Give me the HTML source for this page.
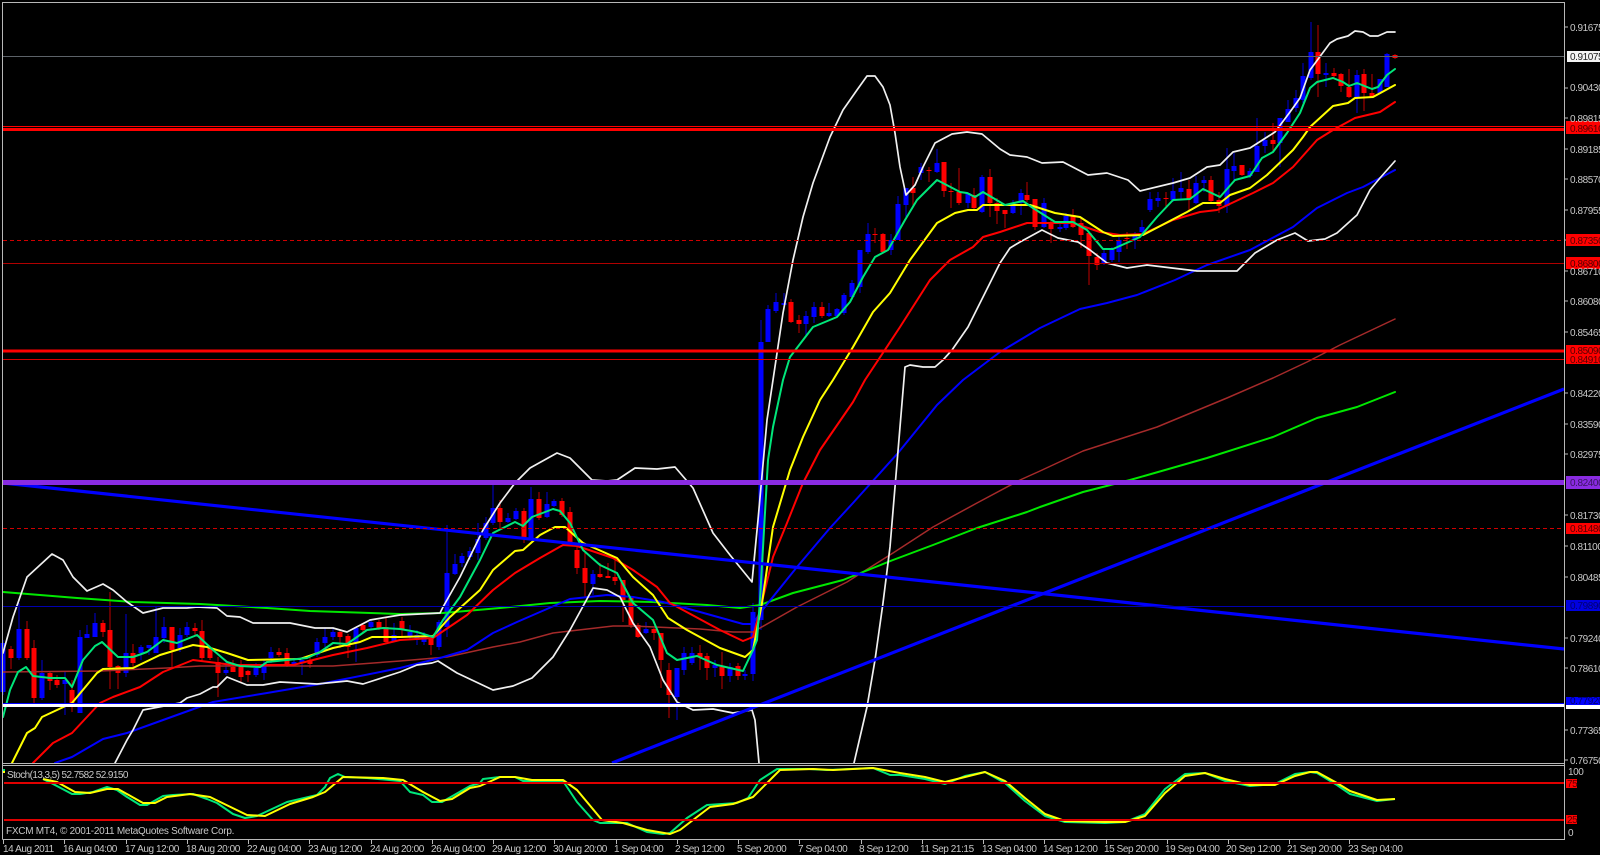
<!DOCTYPE html>
<html><head><meta charset="utf-8"><style>
html,body{margin:0;padding:0;background:#000;width:1600px;height:855px;overflow:hidden}
svg{display:block}
text{font-family:"Liberation Sans",sans-serif;font-size:10px;letter-spacing:-.42px;fill:#c8c8c8}
.d{fill:#500}
</style></head><body>
<svg width="1600" height="855" viewBox="0 0 1600 855" xmlns="http://www.w3.org/2000/svg">
<rect width="1600" height="855" fill="#000"/>
<g fill="none" shape-rendering="crispEdges">
<path stroke="#0000d8" stroke-width="1" d="M3 640V695M19 603V660M42 660V700M65 672V715M80 630V713M87 625V638M95 613V637M126 614V677M141 645V660M149 645V655M156 606V653M164 617V643M180 628V652M187 622V637M226 662V675M256 663V677M264 660V680M271 647V663M294 658V666M302 657V675M317 638V657M325 628V647M333 628V640M356 627V662M371 620V630M394 623V642M410 625V640M417 630V645M424 632V645M439 620V650M447 525V637M455 554V575M462 553V567M470 547V560M478 523V560M486 517V540M493 485V525M508 513V523M516 508V520M531 487V539M547 492V518M554 499V507M593 570V595M646 622V634M677 668V720M684 647V675M692 647V665M715 660V677M730 663V682M745 670V680M753 603V681M761 320V630M768 305V342M776 293V313M784 293V305M806 311V335M814 302V323M829 303V317M837 308V317M844 293V315M852 280V300M860 250V293M868 223V254M891 234V255M898 196V240M906 188V217M921 163V180M937 149V173M968 192V208M982 175V213M1013 200V214M1021 189V215M1044 198V228M1060 222V232M1066 213V230M1104 248V265M1112 247V262M1119 237V262M1135 232V249M1142 220V233M1150 192V212M1158 192V207M1173 178V202M1181 172V200M1196 176V204M1204 176V192M1227 148V213M1234 153V180M1250 168V178M1257 118V172M1265 132V153M1280 118V167M1288 100V122M1296 90V112M1303 63V103M1311 22V80M1326 63V87M1357 70V113M1380 79V93M1387 53V87"/>
<path stroke="#0000ff" stroke-width="5" d="M3 643V692M19 629V658M42 673V698M65 680V684M80 637V713M87 634V638M95 623V637M126 653V673M141 647V653M149 645V648M156 637V653M164 627V638M180 635V648M187 627V635M226 670V673M256 668V675M264 665V673M271 652V658M294 662V665M302 660V663M317 642V655M325 637V643M333 632V637M356 628V643M371 622V627M394 635V642M410 632V637M417 635V640M424 637V642M439 622V647M447 573V627M455 564V574M462 556V563M470 551V557M478 539V553M486 523V538M493 508V523M508 518V522M516 511V519M531 499V538M547 504V517M554 501V506M593 574V584M646 629V633M677 668V697M684 653V670M692 653V663M715 665V668M730 667V676M745 674V676M753 612V674M761 342V620M768 309V342M776 302V311M784 303V305M806 316V324M814 307V317M829 313V316M837 309V316M844 295V313M852 283V297M860 250V287M868 234V252M891 240V250M898 204V240M906 188V205M921 167V173M937 163V172M968 193V203M982 177V212M1013 203V213M1021 193V203M1044 203V227M1060 227V229M1066 216V228M1104 253V263M1112 250V260M1119 240V252M1135 235V240M1142 227V232M1150 199V210M1158 198V201M1173 191V200M1181 188V192M1196 183V203M1204 180V183M1227 169V206M1234 166V171M1250 171V176M1257 146V172M1265 140V146M1280 118V143M1288 109V122M1296 98V108M1303 76V100M1311 52V78M1326 73V75M1357 75V97M1380 79V93M1387 54V87"/>
<path stroke="#c00000" stroke-width="1" d="M11 646V669M27 621V660M34 640V703M50 672V690M57 675V688M72 680V712M103 620V637M110 592V689M118 665V689M133 644V667M172 627V667M195 623V635M202 620V662M210 648V660M218 657V697M233 660V672M241 660V682M248 670V682M279 648V657M287 648V667M310 655V668M340 630V648M348 634V658M363 623V632M379 620V630M386 617V643M402 617V638M431 637V655M500 500V528M524 508V543M539 492V520M562 498V517M570 507V545M577 545V574M585 553V597M600 563V578M608 563V578M615 560V585M623 580V622M631 597V628M638 623V638M654 628V640M661 633V688M669 663V718M700 645V670M707 653V680M722 652V689M738 663V680M791 299V323M799 315V333M822 302V318M875 228V243M883 233V253M913 177V208M929 167V182M944 162V197M951 183V208M959 168V205M974 188V210M990 169V217M997 198V224M1005 210V228M1027 182V202M1035 199V230M1051 220V243M1073 209V228M1081 218V248M1089 233V285M1097 253V270M1127 232V249M1166 192V208M1189 180V210M1211 176V202M1219 192V213M1242 165V176M1273 123V152M1318 25V97M1334 68V78M1341 73V92M1349 69V98M1364 69V111M1372 74V98M1395 54V59"/>
<path stroke="#ff0000" stroke-width="5" d="M11 649V658M27 629V658M34 648V698M50 673V681M57 680V685M72 690V705M103 623V632M110 630V667M118 666V673M133 653V663M172 627V650M195 628V631M202 631V658M210 648V658M218 662V673M233 667V672M241 667V677M248 671V675M279 652V655M287 653V665M310 660V664M340 632V637M348 636V647M363 625V630M379 622V628M386 627V642M402 621V630M431 638V645M500 508V522M524 511V537M539 499V518M562 501V515M570 512V542M577 550V568M585 568V583M600 574V577M608 576V578M615 577V581M623 580V600M631 598V625M638 625V637M654 629V633M661 633V660M669 670V695M700 653V657M707 656V668M722 667V676M738 666V676M791 302V322M799 320V324M822 307V316M875 234V235M883 234V252M913 188V193M929 170V171M944 162V191M951 191V192M959 192V203M974 195V208M990 177V203M997 203V211M1005 210V214M1027 195V200M1035 199V227M1051 223V229M1073 215V227M1081 223V235M1089 233V256M1097 257V265M1127 238V239M1166 198V199M1189 189V199M1211 180V201M1219 200V206M1242 165V175M1273 140V144M1318 52V74M1334 73V76M1341 74V86M1349 87V97M1364 74V93M1372 93V97M1395 55V58"/>
</g>
<g fill="none" stroke-linejoin="round" stroke-linecap="round">
<polyline stroke="#a52a2a" stroke-width="1.5" points="3,672 100,671 167,668 200,666 333,666 400,661 447,657 493,647 520,642 553,633 613,626 633,626 700,629 733,632 753,632 760,628 797,607 847,582 893,553 933,527 977,503 1020,480 1040,471 1083,451 1157,427 1227,398 1273,378 1307,362 1340,345 1395,319"/>
<polyline stroke="#00e800" stroke-width="2" points="3,592 77,598 133,602 200,604 267,608 310,611 400,614 443,613 500,608 550,603 600,601 653,602 707,605 740,608 760,605 793,593 843,580 893,560 933,545 977,528 1027,512 1040,507 1083,492 1130,480 1207,458 1273,437 1317,418 1357,407 1395,392"/>
<polyline stroke="#0000ff" stroke-width="2" points="55,763 72,757 103,739 127,733 213,702 267,693 320,684 400,668 440,658 467,650 493,633 517,622 540,612 570,599 607,595 633,597 663,602 700,612 743,624 753,624 760,613 797,567 830,528 853,503 898,453 937,405 963,380 1000,352 1040,328 1080,309 1107,303 1137,295 1175,280 1207,265 1250,250 1293,227 1317,208 1347,193 1363,187 1395,170"/>
<polyline stroke="#f0f0f0" stroke-width="1.7" points="3,653 13,617 27,577 52,554 63,560 73,577 87,591 103,584 113,590 127,602 143,613 163,608 187,608 197,607 217,608 227,616 240,617 253,623 290,623 315,628 333,628 347,632 370,620 400,615 440,613 443,607 460,577 483,530 500,503 515,483 530,468 557,453 570,458 592,480 607,481 617,480 635,468 657,469 675,467 693,488 713,533 730,555 752,582 758,520 767,420 773,380 783,313 793,260 803,217 813,183 830,137 843,110 857,90 867,76 875,76 883,87 890,105 895,133 900,167 906,195 915,185 923,167 935,143 952,134 967,132 982,134 1000,149 1010,155 1027,157 1042,163 1063,162 1088,175 1107,173 1128,180 1140,191 1173,183 1190,178 1207,167 1220,165 1233,152 1250,148 1275,132 1290,112 1300,98 1310,70 1330,43 1337,39 1348,36 1355,31 1363,32 1370,36 1378,36 1387,32 1395,32"/>
<polyline stroke="#f0f0f0" stroke-width="1.7" points="115,763 127,740 133,730 143,710 180,703 187,698 200,694 213,687 217,687 227,677 247,685 263,685 280,682 317,684 347,681 363,684 400,672 417,665 432,663 438,661 457,673 493,690 513,686 532,678 553,657 570,630 593,588 607,590 620,597 633,623 650,647 663,680 677,702 693,710 713,709 733,713 752,710 755,720 759,763"/>
<polyline stroke="#f0f0f0" stroke-width="1.7" points="854,763 867,707 875,660 883,603 890,547 895,487 900,427 905,367 910,365 923,367 935,367 943,360 952,350 968,327 980,303 1000,263 1010,248 1020,242 1042,230 1058,238 1078,242 1090,250 1107,263 1127,268 1147,265 1197,271 1237,271 1255,253 1277,240 1295,233 1308,241 1325,239 1337,233 1357,215 1370,190 1380,178 1395,161"/>
<polyline stroke="#ff0000" stroke-width="2" points="33,763 53,743 72,733 100,703 113,697 140,687 163,672 173,668 193,660 233,665 293,665 333,655 367,648 400,640 433,638 467,615 493,590 515,573 540,558 563,545 577,546 613,558 633,570 657,587 670,603 720,630 743,641 753,637 760,610 773,557 787,523 803,483 820,450 853,402 865,380 900,327 930,280 950,260 973,247 983,237 1000,232 1027,223 1073,223 1100,232 1120,235 1143,234 1173,220 1200,212 1217,210 1253,193 1273,183 1293,167 1317,140 1333,130 1355,118 1380,112 1395,102"/>
<polyline stroke="#ffff00" stroke-width="2" points="12,763 27,733 35,728 42,717 57,710 72,703 97,673 103,669 133,668 160,655 193,645 207,647 227,653 248,660 300,659 333,648 360,642 372,637 400,637 433,636 450,617 480,590 493,570 515,551 523,550 540,535 555,527 565,527 583,543 617,558 633,577 653,595 668,618 687,630 720,648 745,657 753,650 762,603 773,527 790,470 803,437 820,400 833,380 853,347 873,312 890,293 910,260 937,223 955,213 968,210 977,210 983,205 1000,205 1030,205 1055,213 1080,217 1103,232 1113,236 1143,235 1187,212 1203,203 1220,203 1230,195 1250,188 1267,175 1293,150 1303,137 1310,127 1333,106 1348,103 1355,98 1373,97 1395,85"/>
<polyline stroke="#00e67a" stroke-width="2" points="3,717 10,690 18,672 26,667 33,676 50,678 65,678 72,687 83,660 95,646 102,642 118,657 133,657 147,652 163,640 177,643 197,635 213,650 227,662 240,666 260,667 267,662 307,658 320,652 333,643 347,644 367,630 383,628 400,629 417,632 433,637 443,620 460,597 480,560 493,533 515,522 523,526 532,517 553,509 560,511 570,523 583,550 600,565 617,573 633,603 653,620 667,653 677,660 697,656 717,665 743,671 753,650 757,640 760,600 768,460 773,427 783,380 790,357 813,327 837,317 850,302 863,277 875,257 888,250 905,220 917,200 937,180 960,192 967,193 975,197 983,192 1005,205 1023,201 1033,208 1055,222 1073,222 1087,230 1103,249 1113,249 1140,237 1157,217 1173,200 1190,199 1203,189 1220,197 1235,180 1250,176 1262,158 1273,152 1287,133 1300,113 1310,88 1317,82 1333,78 1343,82 1349,86 1357,83 1372,89 1378,87 1387,75 1395,69"/>
</g>
<!-- trend lines -->
<g fill="none" stroke="#0000ff" stroke-width="3.2">
<line x1="3" y1="483" x2="1564" y2="649"/>
<line x1="612" y1="763" x2="1564" y2="389"/>
</g>
<!-- horizontals -->
<g shape-rendering="crispEdges" fill="none">
<line x1="3" x2="1564" y1="56.5" y2="56.5" stroke="#5c6268"/>
<line x1="3" x2="1564" y1="126.5" y2="126.5" stroke="#f00" stroke-width="1"/>
<line x1="3" x2="1564" y1="129.5" y2="129.5" stroke="#f00" stroke-width="3"/>
<line x1="3" x2="1564" y1="240.5" y2="240.5" stroke="#d00000" stroke-dasharray="4 3"/>
<line x1="3" x2="1564" y1="263.5" y2="263.5" stroke="#b00000"/>
<line x1="3" x2="1564" y1="351" y2="351" stroke="#f00" stroke-width="3"/>
<line x1="3" x2="1564" y1="359.5" y2="359.5" stroke="#d80000"/>
<line x1="3" x2="1564" y1="482.5" y2="482.5" stroke="#8a2be2" stroke-width="5"/>
<line x1="3" x2="1564" y1="528.5" y2="528.5" stroke="#d00000" stroke-dasharray="4 3"/>
<line x1="3" x2="1564" y1="606.5" y2="606.5" stroke="#0000b0"/>
<line x1="3" x2="1564" y1="703.5" y2="703.5" stroke="#0000ff"/>
<line x1="3" x2="1564" y1="705.5" y2="705.5" stroke="#fff" stroke-width="3"/>
</g>
<!-- stochastic -->
<g fill="none" stroke-linejoin="round">
<polyline stroke="#00e67a" stroke-width="2" points="43,779 55,785 72,794 80,794 93,792 107,787 117,790 127,797 140,805 147,805 163,796 173,795 193,794 207,799 217,803 233,814 245,818 257,816 287,802 300,799 317,795 325,787 330,778 338,774 345,777 367,778 400,781 410,792 423,795 432,802 442,802 470,786 480,783 483,779 500,777 515,777 523,781 563,781 577,802 593,820 600,823 627,823 647,832 663,834 670,833 687,818 707,805 737,803 748,798 760,780 777,769 810,769 827,770 873,768 890,775 900,775 925,779 945,784 965,776 985,772 1005,783 1025,801 1045,816 1065,822 1105,823 1125,822 1145,814 1165,789 1185,774 1205,773 1225,781 1250,786 1275,784 1295,774 1310,772 1317,773 1337,785 1350,794 1377,801 1395,799"/>
<polyline stroke="#ffff00" stroke-width="2" points="43,779 57,782 75,792 90,793 107,789 118,789 143,803 155,803 167,797 190,794 210,797 247,815 265,816 290,804 313,797 325,792 343,777 383,778 403,780 423,792 440,801 452,799 470,788 480,786 500,777 515,777 532,780 563,780 577,790 602,820 623,823 647,830 670,834 680,830 710,807 733,804 753,797 780,770 813,769 833,770 873,768 900,773 925,777 945,782 965,777 985,772 1005,781 1025,798 1045,814 1065,821 1105,822 1125,822 1145,816 1165,793 1185,776 1205,773 1225,779 1250,785 1275,785 1295,776 1310,772 1317,772 1337,783 1350,791 1377,800 1395,799"/>
</g>
<g shape-rendering="crispEdges" fill="none">
<line x1="4" x2="1564" y1="783" y2="783" stroke="#e00000" stroke-width="2"/>
<line x1="4" x2="1564" y1="820" y2="820" stroke="#e00000" stroke-width="2"/>
<!-- frame -->
<path stroke="#b8b8b8" d="M2.5 839.5V2.5H1564.5V839.5H2.5M2.5 763.5H1564.5M2.5 765.5H1564.5"/>
<!-- right ticks -->
<path stroke="#b8b8b8" d="M1565 27h3M1565 88h3M1565 118h3M1565 149h3M1565 179h3M1565 210h3M1565 240h3M1565 271h3M1565 301h3M1565 332h3M1565 393h3M1565 424h3M1565 454h3M1565 515h3M1565 546h3M1565 577h3M1565 638h3M1565 668h3M1565 730h3M1565 760h3"/>
<!-- bottom ticks -->
<path stroke="#b8b8b8" d="M3.5 840v4M64.5 840v4M126.5 840v4M187.5 840v4M248.5 840v4M309.5 840v4M371.5 840v4M432.5 840v4M493.5 840v4M554.5 840v4M616.5 840v4M677.5 840v4M738.5 840v4M799.5 840v4M861.5 840v4M922.5 840v4M983.5 840v4M1044.5 840v4M1106.5 840v4M1167.5 840v4M1228.5 840v4M1289.5 840v4M1349.5 840v4"/>
<rect x="3" y="769" width="2" height="2" fill="#00e67a" stroke="none"/>
<rect x="3" y="771" width="2" height="2" fill="#ffff00" stroke="none"/>
<!-- label backgrounds -->
<g stroke="none">
<rect x="1567" y="51" width="33" height="11" fill="#f4f4f4"/>
<rect x="1566" y="121" width="34" height="13" fill="#f00"/>
<rect x="1566" y="234" width="34" height="12" fill="#f00"/>
<rect x="1566" y="257" width="34" height="12" fill="#f00"/>
<rect x="1566" y="345" width="34" height="19" fill="#f00"/>
<rect x="1566" y="476" width="34" height="13" fill="#8a2be2"/>
<rect x="1566" y="523" width="34" height="11" fill="#f00"/>
<rect x="1566" y="600" width="34" height="11" fill="#0000e0"/>
<rect x="1566" y="697" width="34" height="8" fill="#0000ff"/>
<rect x="1566" y="705" width="34" height="4" fill="#fff"/>
<rect x="1566" y="779" width="11" height="9" fill="#f00"/>
<rect x="1566" y="815" width="11" height="9" fill="#f00"/>
</g>
</g>
<!-- price labels -->
<text x="1570" y="31">0.91675</text>
<text x="1570" y="60" style="fill:#222">0.91075</text>
<text x="1570" y="91">0.90430</text>
<text x="1570" y="122">0.89815</text>
<text x="1570" y="132" class="d">0.89610</text>
<text x="1570" y="153">0.89185</text>
<text x="1570" y="183">0.88570</text>
<text x="1570" y="214">0.87955</text>
<text x="1570" y="244" class="d">0.87350</text>
<text x="1570" y="267" class="d">0.86800</text>
<text x="1570" y="275">0.86710</text>
<text x="1570" y="305">0.86080</text>
<text x="1570" y="336">0.85465</text>
<text x="1570" y="354" class="d">0.85090</text>
<text x="1570" y="363" class="d">0.84910</text>
<text x="1570" y="397">0.84220</text>
<text x="1570" y="428">0.83590</text>
<text x="1570" y="458">0.82975</text>
<text x="1570" y="486" style="fill:#3a1560">0.82400</text>
<text x="1570" y="519">0.81730</text>
<text x="1570" y="532" class="d">0.81480</text>
<text x="1570" y="550">0.81100</text>
<text x="1570" y="581">0.80485</text>
<text x="1570" y="609" style="fill:#000070">0.79890</text>
<text x="1570" y="642">0.79240</text>
<text x="1570" y="672">0.78610</text>
<text x="1570" y="704" style="fill:#000060">0.77920</text>
<text x="1570" y="734">0.77365</text>
<text x="1570" y="764">0.76750</text>
<text x="1568" y="775">100</text>
<text x="1567" y="787" class="d">75</text>
<text x="1567" y="823" class="d">25</text>
<text x="1568" y="836">0</text>
<!-- sub window labels -->
<text x="7" y="778" textLength="121" lengthAdjust="spacing">Stoch(13,3,5) 52.7582 52.9150</text>
<text x="6" y="834" textLength="228" lengthAdjust="spacing">FXCM MT4, © 2001-2011 MetaQuotes Software Corp.</text>
<!-- time labels -->
<text x="3" y="852">14 Aug 2011</text>
<text x="63" y="852">16 Aug 04:00</text>
<text x="125" y="852">17 Aug 12:00</text>
<text x="186" y="852">18 Aug 20:00</text>
<text x="247" y="852">22 Aug 04:00</text>
<text x="308" y="852">23 Aug 12:00</text>
<text x="370" y="852">24 Aug 20:00</text>
<text x="431" y="852">26 Aug 04:00</text>
<text x="492" y="852">29 Aug 12:00</text>
<text x="553" y="852">30 Aug 20:00</text>
<text x="614" y="852">1 Sep 04:00</text>
<text x="675" y="852">2 Sep 12:00</text>
<text x="737" y="852">5 Sep 20:00</text>
<text x="798" y="852">7 Sep 04:00</text>
<text x="859" y="852">8 Sep 12:00</text>
<text x="920" y="852">11 Sep 21:15</text>
<text x="982" y="852">13 Sep 04:00</text>
<text x="1043" y="852">14 Sep 12:00</text>
<text x="1104" y="852">15 Sep 20:00</text>
<text x="1165" y="852">19 Sep 04:00</text>
<text x="1226" y="852">20 Sep 12:00</text>
<text x="1287" y="852">21 Sep 20:00</text>
<text x="1348" y="852">23 Sep 04:00</text>
</svg>
</body></html>
